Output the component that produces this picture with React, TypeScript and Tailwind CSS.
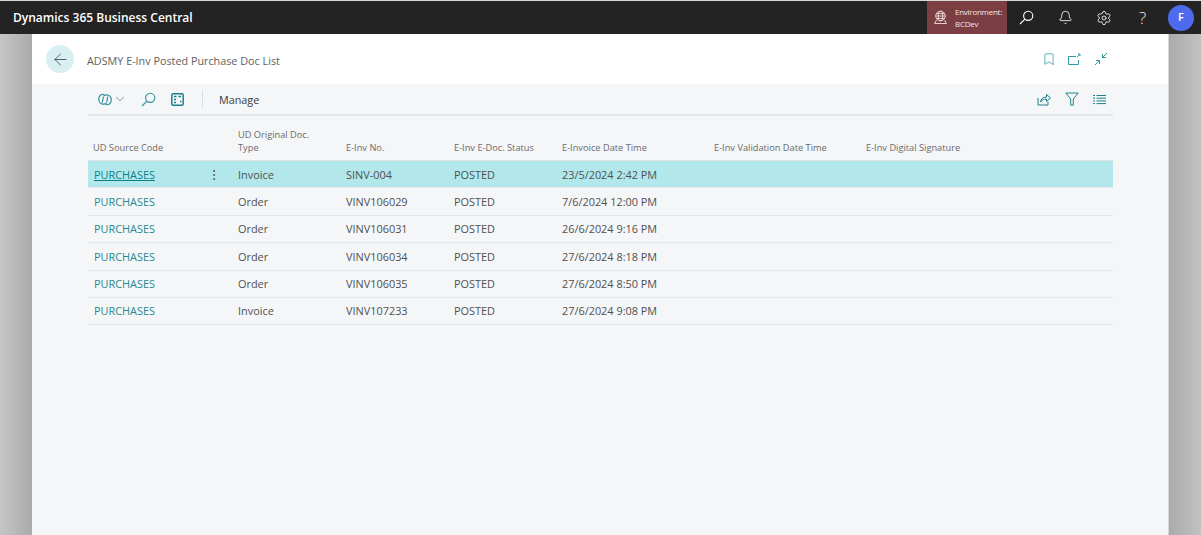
import { ArrowLeft, Bell, ChevronDown, Settings, Bookmark, MoreVertical } from 'lucide-react'

const rows = [
  ['Invoice', 'SINV-004', 'POSTED', '23/5/2024 2:42 PM'],
  ['Order', 'VINV106029', 'POSTED', '7/6/2024 12:00 PM'],
  ['Order', 'VINV106031', 'POSTED', '26/6/2024 9:16 PM'],
  ['Order', 'VINV106034', 'POSTED', '27/6/2024 8:18 PM'],
  ['Order', 'VINV106035', 'POSTED', '27/6/2024 8:50 PM'],
  ['Invoice', 'VINV107233', 'POSTED', '27/6/2024 9:08 PM'],
]

const gridCols = 'grid grid-cols-[150px_108px_108px_108px_152px_152px_1fr]'

function SearchIcon({ className }: { className?: string }) {
  return (
    <svg width="15" height="15" viewBox="0 0 15 15" fill="none" stroke="currentColor" strokeWidth="1.1" className={className}>
      <circle cx="9.2" cy="5.8" r="4.6" />
      <path d="M5.9 9.1 1 14" />
    </svg>
  )
}

function CopilotIcon() {
  return (
    <svg width="14" height="13" viewBox="0 0 14 13" fill="none" stroke="#2f8f96" strokeWidth="1.2">
      <path d="M6.5 1.5C3.2.5.7 3 .7 6.2c0 3 2.2 5 5 5 1.2 0 2.2-.5 2.8-1.3" />
      <path d="M7.5 11.5c3.3 1 5.8-1.5 5.8-4.7 0-3-2.2-5-5-5-1.2 0-2.2.5-2.8 1.3" />
      <path d="M5.4 3.5 4.2 9.5M9.8 3.5 8.6 9.5" />
    </svg>
  )
}

function EditListIcon() {
  return (
    <svg width="13" height="13" viewBox="0 0 13 13" fill="none" stroke="#1f7f86" strokeWidth="1.5">
      <rect x="0.8" y="0.8" width="11.4" height="11.4" rx="1.5" />
      <path d="M3 3.6h2.5M7.5 3.6h2.5M3 6.5h2M3 9.4h2" />
      <path d="M9 8.5h1.5" strokeDasharray="1.5 1" />
    </svg>
  )
}

function OpenNewIcon() {
  return (
    <svg width="14" height="13" viewBox="0 0 14 13" fill="none" stroke="#2f9aa0" strokeWidth="1">
      <path d="M9 3.5H1.5v8h10V7" />
      <path d="M10 4l3-3M11 1h2v2" />
    </svg>
  )
}

function CollapseIcon() {
  return (
    <svg width="14" height="14" viewBox="0 0 14 14" fill="none" stroke="#2f9aa0" strokeWidth="1">
      <path d="M13 1 8.5 5.5M8.5 2v3.5H12" />
      <path d="M1 13l4.5-4.5M2 8.5h3.5V12" />
    </svg>
  )
}

function ShareIcon() {
  return (
    <svg width="14" height="14" viewBox="0 0 14 14" fill="none" stroke="#1f8088" strokeWidth="1">
      <path d="M1 6v7h10v-3" />
      <path d="M3.5 10c.3-3 2.5-5 6-5V2.5L13.5 6l-4 3.5V7C7 7 5 8 3.5 10z" />
    </svg>
  )
}

function FunnelIcon() {
  return (
    <svg width="14" height="14" viewBox="0 0 14 14" fill="none" stroke="#1f8088" strokeWidth="1">
      <path d="M.8 1h12.4L8.3 7v6.2H5.7V7z" />
    </svg>
  )
}

function ListIcon() {
  return (
    <svg width="13" height="11" viewBox="0 0 13 11" fill="none" stroke="#1f8088" strokeWidth="1">
      <path d="M0 1.5h2M3.5 1.5H13M0 4.2h2M3.5 4.2H13M0 6.9h2M3.5 6.9H13M0 9.6h2M3.5 9.6H13" />
    </svg>
  )
}

function GlobeIcon() {
  return (
    <svg width="15" height="15" viewBox="0 0 15 15" fill="none" stroke="#f1dede" strokeWidth="0.9">
      <circle cx="7.5" cy="6" r="4.8" />
      <ellipse cx="7.5" cy="6" rx="2.2" ry="4.8" />
      <path d="M2.7 6h9.6M3.4 3.6h8.2M3.4 8.4h8.2" />
      <path d="M3.5 10 1.5 13.5h12L11.5 10" />
    </svg>
  )
}

export default function App() {
  return (
    <div className="h-[535px] w-[1201px] overflow-hidden flex flex-col bg-[#b9b9b9] font-['Open_Sans',sans-serif]">
      <header className="h-[34px] shrink-0 border-t border-t-[#d8d8d8] bg-[#232323] flex items-center text-white">
        <div className="pl-[13px] text-[12px] font-semibold">Dynamics 365 Business Central</div>
        <div className="ml-auto flex h-full items-center">
          <div className="w-[80px] h-full bg-[#7a3e43] flex items-center pl-[6px] gap-[7px] text-[#f6e6e6]">
            <GlobeIcon />
            <div className="text-[7.9px] leading-[12px] font-medium tracking-[-0.2px]">
              <div>Environment:</div>
              <div>BCDev</div>
            </div>
          </div>
          <div className="w-[38px] flex justify-center">
            <SearchIcon />
          </div>
          <div className="w-[40px] flex justify-center">
            <Bell size={15} strokeWidth={1.3} />
          </div>
          <div className="w-[38px] flex justify-center">
            <Settings size={16} strokeWidth={1.3} />
          </div>
          <div className="w-[39px] flex justify-center text-[17px] font-light text-[#e8e8e8]">?</div>
          <div className="w-[26px] h-[26px] ml-[6px] mr-[7px] rounded-full bg-[#4f6bed] flex items-center justify-center text-[11px] font-semibold">
            F
          </div>
        </div>
      </header>

      <div className="flex-1 flex">
        <div className="w-[32px] bg-gradient-to-r from-[#c6c6c6] to-[#aaaaaa]" />
        <main className="flex-1 flex flex-col bg-[#f5f6f8] border-r border-r-[#d6d6d6]">
          <div className="h-[50px] bg-white flex items-center pl-[14px] pr-[60px]">
            <div className="w-[28px] h-[28px] rounded-full bg-[#d9f0f2] flex items-center justify-center">
              <ArrowLeft size={19} strokeWidth={1} className="text-[#2f3d42]" />
            </div>
            <h1 className="ml-[13px] mt-[4px] text-[10.8px] text-[#616161]">ADSMY E-Inv Posted Purchase Doc List</h1>
            <div className="ml-auto flex items-center gap-[11px] text-[#2f9aa0]">
              <Bookmark size={14} strokeWidth={1.3} />
              <OpenNewIcon />
              <span className="ml-[2px]">
                <CollapseIcon />
              </span>
            </div>
          </div>

          <div className="ml-[56px] mr-[55px]">
            <div className="h-[32px] border-b-2 border-b-[#e6e7e9] flex items-center pl-[10px] pr-[7px]">
              <CopilotIcon />
              <ChevronDown size={14} strokeWidth={1} className="ml-[1px] text-[#444]" />
              <SearchIcon className="ml-[14px] text-[#2f8f96]" />
              <div className="ml-[15px] flex">
                <EditListIcon />
              </div>
              <div className="ml-[18px] h-[18px] w-px bg-[#dcdddf]" />
              <span className="ml-[16px] mt-[2px] text-[10.8px] text-[#3a3a3a]">Manage</span>
              <div className="ml-auto flex items-center gap-[14px]">
                <ShareIcon />
                <FunnelIcon />
                <ListIcon />
              </div>
            </div>

            <div className={`${gridCols} h-[45px] items-end pb-[6px] border-b border-b-[#dfe0e2] text-[9.25px] leading-[13px] text-[#6b6b6b]`}>
              <div className="pl-[5px]">UD Source Code</div>
              <div>UD Original Doc.<br />Type</div>
              <div>E-Inv No.</div>
              <div>E-Inv E-Doc. Status</div>
              <div>E-Invoice Date Time</div>
              <div>E-Inv Validation Date Time</div>
              <div>E-Inv Digital Signature</div>
            </div>

            {rows.map((r, i) => (
              <div
                key={r[1]}
                className={`${gridCols} h-[27.4px] items-center pt-px border-b border-b-[#e6e7e9] text-[10.9px] text-[#505050] ${i === 0 ? 'bg-[#b2e8ec]' : ''}`}
              >
                <div className="pl-[6px] flex items-center justify-between pr-[17px]">
                  <span className={i === 0 ? 'text-[#0f7f86] underline' : 'text-[#27898f]'}>PURCHASES</span>
                  {i === 0 && <MoreVertical size={14} strokeWidth={1.3} className="text-[#444]" />}
                </div>
                <div>{r[0]}</div>
                <div>{r[1]}</div>
                <div>{r[2]}</div>
                <div>{r[3]}</div>
                <div />
                <div />
              </div>
            ))}
          </div>
        </main>
        <div className="w-[32px] bg-gradient-to-r from-[#aaaaaa] to-[#c2c2c2]" />
      </div>
    </div>
  )
}
